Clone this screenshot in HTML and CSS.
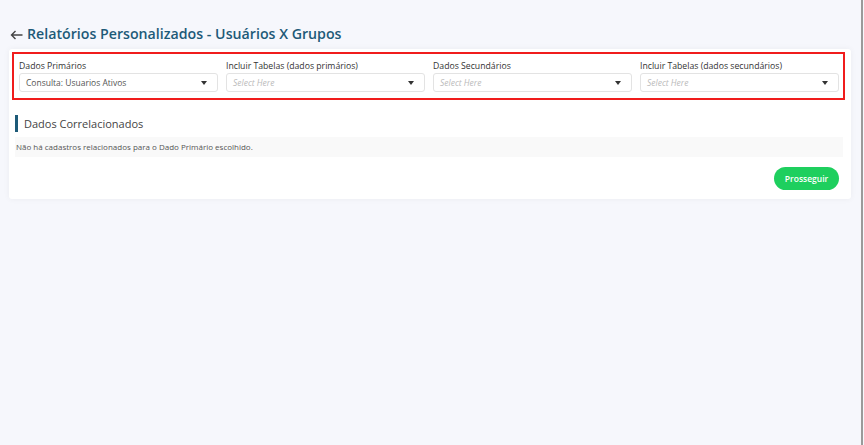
FILE: index.html
```html
<!DOCTYPE html>
<html lang="pt-BR">
<head>
  <meta charset="UTF-8">
  <meta name="viewport" content="width=device-width, initial-scale=1.0">
  <title>Relatórios Personalizados</title>
  <link rel="stylesheet" href="styles.css">
</head>
<body>
  <div class="page">
    <h1 class="title">
      <svg class="back" width="13" height="10" viewBox="0 0 13 10"><path d="M12.5 5H1.5M5.5 1L1.5 5l4 4" fill="none" stroke="#444" stroke-width="1.4"/></svg>
      Relatórios Personalizados - Usuários X Grupos
    </h1>

    <div class="card">
      <!-- Filtros -->
      <div class="filters">
        <div class="field">
          <label>Dados Primários</label>
          <div class="select">
            <span>Consulta: Usuarios Ativos</span>
            <i class="caret"></i>
          </div>
        </div>
        <div class="field">
          <label>Incluir Tabelas (dados primários)</label>
          <div class="select">
            <span class="placeholder">Select Here</span>
            <i class="caret"></i>
          </div>
        </div>
        <div class="field">
          <label>Dados Secundários</label>
          <div class="select">
            <span class="placeholder">Select Here</span>
            <i class="caret"></i>
          </div>
        </div>
        <div class="field">
          <label>Incluir Tabelas (dados secundários)</label>
          <div class="select">
            <span class="placeholder">Select Here</span>
            <i class="caret"></i>
          </div>
        </div>
      </div>

      <!-- Correlacionados -->
      <div class="section">
        <h3 class="section-title">Dados Correlacionados</h3>
        <div class="empty">Não há cadastros relacionados para o Dado Primário escolhido.</div>
        <div class="actions">
          <button class="btn">Prosseguir</button>
        </div>
      </div>
    </div>
  </div>
</body>
</html>
```

FILE: styles.css
```css
* { box-sizing: border-box; }
html, body {
  margin: 0;
  height: 100%;
}
body {
  font-family: "Open Sans", sans-serif;
  background: #f6f7fc;
  border-right: 2px solid #9a9a9a;
  width: 863px;
}
.page {
  padding: 24px 10px 0 9px;
}
.title {
  display: flex;
  align-items: center;
  gap: 4px;
  margin: 0 0 5px 1px;
  font-size: 14.2px;
  font-weight: 600;
  line-height: 20px;
  color: #1d5a78;
}
.back {
  margin-top: 1px;
}
.card {
  background: white;
  border-radius: 3px;
  box-shadow: 0 0 6px rgba(0,0,0,0.05);
  padding: 3px 6px 9px 3px;
}
.filters {
  border: 2px solid #f01c1c;
  padding: 6px 4px 6px 5px;
  display: grid;
  grid-template-columns: repeat(4, 1fr);
  gap: 8px;
}
.field label {
  display: block;
  font-size: 8.7px;
  line-height: 12px;
  color: #333;
  margin-bottom: 1px;
}
.select {
  display: flex;
  align-items: center;
  justify-content: space-between;
  height: 19px;
  border: 1px solid #e3e3e3;
  border-radius: 3px;
  padding: 0 10px 0 6px;
  font-size: 8.5px;
  color: #555;
}
.placeholder {
  color: #bbb;
  font-style: italic;
}
.caret {
  width: 0;
  height: 0;
  border-left: 3.5px solid transparent;
  border-right: 3.5px solid transparent;
  border-top: 4px solid #333;
}
.section {
  padding: 15px 2px 0 3px;
}
.section-title {
  margin: 0 0 5px;
  border-left: 3px solid #1d5a78;
  padding-left: 6px;
  font-size: 11px;
  font-weight: 500;
  line-height: 17px;
  color: #444;
}
.empty {
  background: #f9f9f9;
  height: 20px;
  line-height: 20px;
  padding-left: 1px;
  font-size: 8px;
  color: #555;
}
.actions {
  display: flex;
  justify-content: flex-end;
  padding: 10px 4px 0 0;
}
.btn {
  background: #1ecf5e;
  color: white;
  border: none;
  border-radius: 12px;
  width: 65px;
  height: 23px;
  font-family: "Open Sans", sans-serif;
  font-size: 8.5px;
  font-weight: 600;
  padding: 0;
  cursor: pointer;
}
```
